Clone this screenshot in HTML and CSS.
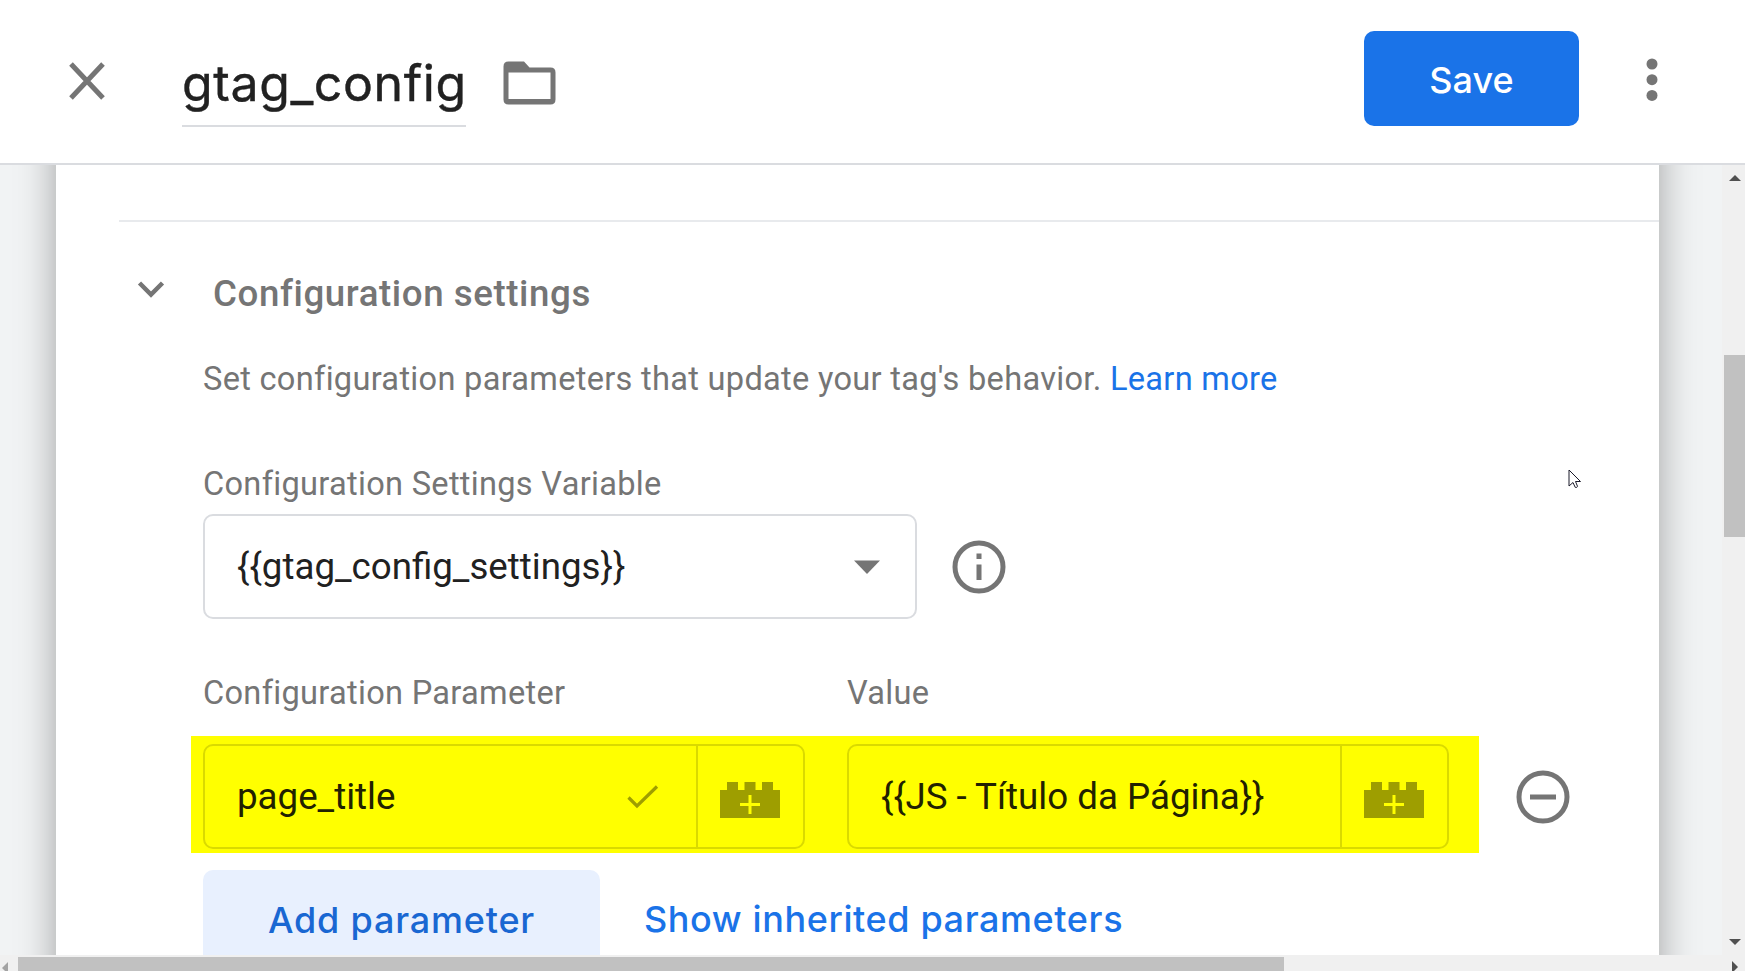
FILE: index.html
```html
<!DOCTYPE html>
<html lang="en">
<head>
<meta charset="utf-8">
<title>gtag_config</title>
<link rel="stylesheet" href="styles.css">
</head>
<body>
<div class="app">
  <header class="header">
    <svg class="close" width="36" height="38" viewBox="0 0 36 38"><path d="M2 2l32 34M34 2L2 36" stroke="#757575" stroke-width="5" fill="none"/></svg>
    <div class="title"><span class="title-text">gtag_config</span></div>
    <svg class="folder" width="53" height="44" viewBox="0 0 53 44"><path fill="#757575" fill-rule="evenodd" d="M5.500 .5H21l5.500 6H47.500Q52.500 6.500 52.500 11.500V38.500Q52.500 43.500 47.500 43.500H5.500Q.5 43.500 .5 38.500V5.500Q.5 .5 5.500 .5zM5.500 11.500V38H47.500V11.500z"/></svg>
    <button class="save"><span class="save-text">Save</span></button>
    <svg class="more" width="12" height="44" viewBox="0 0 12 44"><g fill="#757575"><circle cx="6" cy="6" r="5.500"/><circle cx="6" cy="21.700" r="5.500"/><circle cx="6" cy="37.400" r="5.500"/></g></svg>
  </header>
  <div class="body">
    <main class="viewport">
      <section class="card">
        <div class="rule"></div>
        <div class="heading">
          <svg width="28" height="18" viewBox="0 0 28 18"><path d="M2.500 3L14 14.500 25.500 3" stroke="#757575" stroke-width="4.500" fill="none"/></svg>
          <h2 class="heading-text">Configuration settings</h2>
        </div>
        <div class="content">
          <p class="desc">Set configuration parameters that update your tag's behavior. <a class="link">Learn more</a></p>
          <div class="label variable-label">Configuration Settings Variable</div>
          <div class="select-row">
            <div class="select"><span class="value select-value">{{gtag_config_settings}}</span>
              <svg width="26" height="14" viewBox="0 0 26 14"><path d="M0 .5h26L13 14z" fill="#757575"/></svg>
            </div>
            <svg width="54" height="54" viewBox="0 0 54 54"><circle cx="27" cy="27" r="24" fill="none" stroke="#757575" stroke-width="5"/><path fill="#757575" d="M24.500 13.500h5v5.500h-5zM24.500 24.500h5v15.500h-5z"/></svg>
          </div>
          <div class="labels"><div class="label param-label">Configuration Parameter</div><div class="label">Value</div></div>
          <div class="param-row">
            <div class="highlight">
              <div class="field">
                <div class="field-main"><span class="value name-value">page_title</span>
                  <svg width="32" height="24" viewBox="0 0 32 24"><path d="M1.500 12.500l8.500 8.500L30 1.500" fill="none" stroke="#9e9e00" stroke-width="3.200"/></svg>
                </div>
                <div class="field-add"><svg width="60" height="36" viewBox="0 0 60 36"><path fill="#9e9e00" d="M0 8h7V0h11v8h6.500V0h11v8H42V0h11v8h7v28H0z"/><path d="M30 13v19M20 22.500h20" stroke="#ff0" stroke-width="3"/></svg></div>
              </div>
              <div class="field">
                <div class="field-main"><span class="value js-value">{{JS - Título da Página}}</span></div>
                <div class="field-add"><svg width="60" height="36" viewBox="0 0 60 36"><path fill="#9e9e00" d="M0 8h7V0h11v8h6.500V0h11v8H42V0h11v8h7v28H0z"/><path d="M30 13v19M20 22.500h20" stroke="#ff0" stroke-width="3"/></svg></div>
              </div>
            </div>
            <svg class="remove" width="54" height="54" viewBox="0 0 54 54"><circle cx="27" cy="27" r="24" fill="none" stroke="#757575" stroke-width="5"/><path fill="#757575" d="M14 24.500h26v5H14z"/></svg>
          </div>
          <div class="actions">
            <button class="add"><span class="add-text">Add parameter</span></button>
            <a class="show"><span class="show-text">Show inherited parameters</span></a>
          </div>
        </div>
      </section>
    </main>
    <div class="vbar">
      <svg width="12" height="6" viewBox="0 0 12 6"><path d="M0 6L6 0l6 6z" fill="#505050"/></svg>
      <div class="vthumb"></div>
      <svg class="down" width="12" height="6" viewBox="0 0 12 6"><path d="M0 0h12L6 6z" fill="#505050"/></svg>
    </div>
  </div>
  <div class="hbar">
    <svg width="6" height="12" viewBox="0 0 6 12"><path d="M6 0v12L0 6z" fill="#a3a3a3"/></svg>
    <div class="hthumb"></div>
    <svg class="right" width="6" height="12" viewBox="0 0 6 12"><path d="M0 0l6 6-6 6z" fill="#505050"/></svg>
  </div>
  <svg class="cursor" width="14" height="21" viewBox="0 0 14 21"><path d="M1 1v16l4-3.500 2.200 4.800q1.800 .8 2.300-1L7.500 12.500h5z" fill="#fff" stroke="#1b1b2b" stroke-width="1"/></svg>
</div>
</body>
</html>
```
FILE: styles.css
```css
* { box-sizing: border-box; }
body { margin: 0; font-family: Roboto, "Liberation Sans", sans-serif; color: #212121; }
svg { display: block; flex: none; }
button { border: 0; padding: 0; margin: 0; font: inherit; }
.app { position: relative; width: 1745px; height: 971px; display: flex; flex-direction: column; overflow: hidden; background: #fff; }
.header { flex: none; height: 165px; border-bottom: 2px solid #dadce0; display: flex; align-items: flex-start; }
.close { margin: 62px 0 0 69px; }
.title { margin: 49px 0 0 77px; width: 284px; height: 78px; border-bottom: 2px solid #dadce0; white-space: nowrap; }
.title-text { font: 400 50px/68px Inter, sans-serif; letter-spacing: .6px; -webkit-text-stroke: .4px #212121; }
.folder { margin: 61px 0 0 37px; }
.save { margin: 31px 0 0 808px; width: 215px; height: 95px; border-radius: 10px; background: #1a73e8; color: #fff; font: 500 36px/97px Inter, sans-serif; padding-top: 1px; }
.more { margin: 58px 0 0 67px; }
.body { flex: none; height: 790px; display: flex; }
.viewport { width: 1722px; overflow: hidden; background: #f1f3f4; padding-left: 56px; }
.card { width: 1603px; height: 1000px; margin-top: -100px; padding-top: 155px; background: #fff; box-shadow: 0 0 36px rgba(0,0,0,.34); }
.rule { margin-left: 63px; height: 2px; background: #e8eaed; }
.heading { display: flex; padding: 57px 0 0 81px; height: 123px; }
.heading svg { margin-top: 1px; }
.heading-text { margin: -6px 0 0 48px; font-size: 36.7px; line-height: 42px; font-weight: 500; color: #757575; white-space: nowrap; letter-spacing: .58px; }
.content { padding-left: 147px; }
.desc, .label { margin: 0; font-size: 32.6px; line-height: 38px; color: #757575; letter-spacing: .29px; white-space: nowrap; }
.desc { margin-top: 15px; }
.link { color: #1a73e8; }
.variable-label { margin-top: 67px; }
.select-row { margin-top: 11px; display: flex; align-items: center; gap: 34.500px; }
.select { width: 714px; height: 105px; border: 2px solid #dadce0; border-radius: 10px; display: flex; align-items: center; justify-content: space-between; padding: 0 35px 0 32px; }
.value { font-size: 36.7px; line-height: 42px; white-space: nowrap; }
.labels { display: flex; margin-top: 55px; }
.param-label { width: 644px; }
.param-row { display: flex; align-items: center; margin: 24px 0 0 -12px; gap: 37px; }
.highlight { width: 1288px; height: 117px; background: #ff0; color: #212100; display: flex; gap: 42px; padding: 8px 0 4px 12px; }
.field { display: flex; width: 602px; height: 105px; border: 2px solid #dada00; border-radius: 10px; }
.field-main { width: 491px; display: flex; align-items: center; justify-content: space-between; padding: 1px 37px 0 32px; }
.field-add { flex: 1; border-left: 2px solid #dada00; padding: 36px 0 0 22px; }
.remove { margin-top: 4px; }
.actions { display: flex; margin-top: 17px; }
.add { width: 397px; height: 97px; border-radius: 10px; background: #e8f0fe; color: #1967d2; font: 500 36px/97px Inter, sans-serif; letter-spacing: .8px; padding-top: 2px; }
.show { margin-left: 44px; padding-top: 1px; color: #1a73e8; font: 500 36px/97px Inter, sans-serif; letter-spacing: .6px; white-space: nowrap; }
.vbar { width: 23px; background: #f0f0f0; padding-top: 10px; display: flex; flex-direction: column; align-items: flex-start; }
.vbar svg { margin-left: 7px; }
.vthumb { width: 21px; height: 182px; margin: 174px 0 0 2px; background: #c1c1c1; }
.vbar .down { margin-top: 402px; }
.hbar { flex: none; height: 16px; background: #f0f0f0; display: flex; }
.hbar svg { margin: 7px 0 0 2px; }
.hthumb { width: 1266px; height: 14px; margin: 2px 0 0 10px; background: #c1c1c1; }
.hbar .right { margin-left: 448px; margin-top: 6px; }
.cursor { position: absolute; left: 1568px; top: 469px; }
```
